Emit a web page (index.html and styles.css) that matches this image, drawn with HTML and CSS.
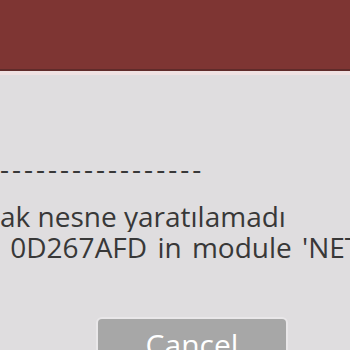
FILE: index.html
```html
<!DOCTYPE html>
<html>
<head>
<meta charset="utf-8">
<link rel="stylesheet" href="styles.css">
</head>
<body>
<div class="header"></div>
<div class="content">
  <div class="line dashes">-----------------</div>
  <div class="message">
    <div class="line">ak nesne yaratılamadı</div>
    <div class="line second"> 0D267AFD in module 'NETX'</div>
  </div>
  <div class="actions">
    <button class="btn">Cancel</button>
  </div>
</div>
</body>
</html>
```

FILE: styles.css
```css
html, body {
  margin: 0;
  padding: 0;
  width: 350px;
  height: 350px;
  overflow: hidden;
  background: #dfdddf;
  font-family: "Open Sans", "Noto Sans", sans-serif;
}
.header {
  height: 69px;
  background: #7e3533;
  border-bottom: 2px solid #5f2b2a;
  box-shadow: 0 4px 0 #efe1e2;
}
.content {
  padding-top: 82px;
  display: flex;
  flex-direction: column;
}
.line {
  font-size: 28px;
  line-height: 31px;
  color: #383838;
  white-space: pre;
  overflow: hidden;
}
.dashes {
  letter-spacing: 3px;
}
.second {
  word-spacing: 3px;
}
.message {
  margin-top: 17px;
}
.actions {
  margin-top: 56px;
  padding-left: 98px;
}
.btn {
  width: 188px;
  height: 48px;
  border: none;
  border-radius: 4px;
  background: #a7a7a7;
  box-shadow: 0 0 0 2px #e9e7e9;
  color: #ffffff;
  font-family: "Open Sans", "Noto Sans", sans-serif;
  font-size: 30px;
  line-height: 31px;
  padding: 10px 0 0 0;
  display: flex;
  justify-content: center;
  align-items: flex-start;
}
```
